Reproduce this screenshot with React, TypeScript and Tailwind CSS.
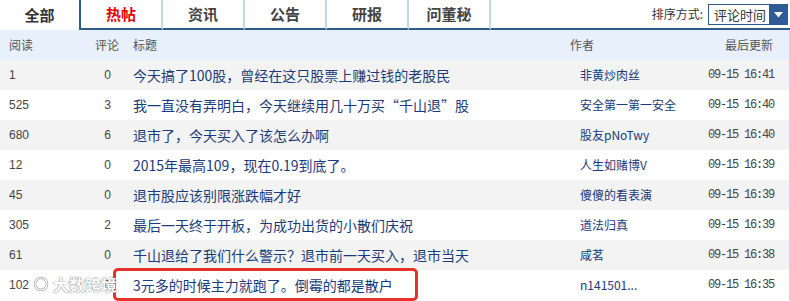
interface Post {
  reads: string;
  comments: string;
  title: string;
  author: string;
  time: string;
}

const tabs = ["全部", "热帖", "资讯", "公告", "研报", "问董秘"];

const posts: Post[] = [
  { reads: "1", comments: "0", title: "今天搞了100股，曾经在这只股票上赚过钱的老股民", author: "非黄炒肉丝", time: "09-15 16:41" },
  { reads: "525", comments: "3", title: "我一直没有弄明白，今天继续用几十万买“千山退”股", author: "安全第一第一安全", time: "09-15 16:40" },
  { reads: "680", comments: "6", title: "退市了，今天买入了该怎么办啊", author: "股友pNoTwy", time: "09-15 16:40" },
  { reads: "12", comments: "0", title: "2015年最高109，现在0.19到底了。", author: "人生如赌博V", time: "09-15 16:39" },
  { reads: "45", comments: "0", title: "退市股应该别限涨跌幅才好", author: "傻傻的看表演", time: "09-15 16:39" },
  { reads: "305", comments: "2", title: "最后一天终于开板，为成功出货的小散们庆祝", author: "道法归真", time: "09-15 16:39" },
  { reads: "61", comments: "0", title: "千山退给了我们什么警示？退市前一天买入，退市当天", author: "咸茗", time: "09-15 16:38" },
  { reads: "102", comments: "0", title: "3元多的时候主力就跑了。倒霉的都是散户", author: "n141501...", time: "09-15 16:35" },
];

const cjk = "font-['Noto_Sans_CJK_SC','Noto_Sans',sans-serif]";

export default function App() {
  return (
    <div className={`relative h-[301px] w-[790px] overflow-hidden bg-white ${cjk}`}>
      {/* tab bar */}
      <div className="flex h-[30px] items-stretch">
        {tabs.map((t, i) => (
          <div
            key={t}
            className={
              i === 0
                ? "flex w-[81px] items-center justify-center border-r-2 border-[#2e5a8c] bg-white text-[15px] font-bold text-[#333]"
                : `flex w-[82px] items-center justify-center border-b-2 border-r-2 border-b-[#2e5a8c] border-r-[#c3d6e6] text-[15px] font-bold ${i === 1 ? "text-[#e60000]" : "text-[#444]"}`
            }
          >
            {t}
          </div>
        ))}
        <div className="flex flex-1 items-start justify-end gap-[5px] border-b-2 border-[#2e5a8c] pt-[4px] pr-[2px]">
          <span className="pt-[2px] text-[12px] leading-[16px] text-[#333]">排序方式:</span>
          <div className="flex h-[21px] w-[80px] border border-[#2e5a8c] bg-white">
            <span className="flex-1 pl-[5px] text-[13px] leading-[19px] text-[#333]">评论时间</span>
            <span className="flex w-[18px] items-center justify-center bg-[#2e5a95]">
              <svg width="9" height="6" viewBox="0 0 9 6">
                <path d="M0 0 H9 L4.5 5.5 Z" fill="#fff" />
              </svg>
            </span>
          </div>
        </div>
      </div>

      <div className="border-r border-[#c8d8e8]">
        {/* header */}
        <div className="flex h-[30px] items-center bg-[#e8f0fb] text-[12px] text-[#555]">
          <span className="w-[95px] pl-[9px]">阅读</span>
          <span className="w-[38px]">评论</span>
          <span className="w-[437px]">标题</span>
          <span className="w-[155px]">作者</span>
          <span>最后更新</span>
        </div>

        {/* rows */}
        {posts.map((p, i) => (
          <div
            key={p.title}
            className={`flex h-[30px] items-center ${i % 2 === 0 ? "bg-[#f3f3f3]" : "bg-white"}`}
          >
            <span className="w-[89px] pl-[9px] font-['Liberation_Sans',sans-serif] text-[12px] text-[#444]">
              {p.reads}
            </span>
            <span className="w-[22px] text-right font-['Liberation_Sans',sans-serif] text-[12px] text-[#444]">
              {p.comments}
            </span>
            <span className="w-[469px] pl-[22px] text-[14px] text-[#1b3a78]">{p.title}</span>
            <span className="w-[128px] text-[12px] text-[#1b3a78]">{p.author}</span>
            <span className="font-['Liberation_Mono',monospace] text-[12px] tracking-[-1.2px] text-[#444]">
              {p.time}
            </span>
          </div>
        ))}
      </div>

      {/* highlight */}
      <div className="absolute left-[113px] top-[268px] h-[33px] w-[305px] rounded-[5px] border-[3px] border-[#e8312a]" />

      {/* watermark */}
      <div className="absolute left-[33px] top-[276px] flex items-center gap-[4px] text-white [text-shadow:0_0_1px_#777,0_0_1px_#777]">
        <svg width="16" height="14" viewBox="0 0 16 14" className="opacity-90">
          <circle cx="8" cy="7" r="6" fill="none" stroke="#999" strokeWidth="2.5" />
          <circle cx="8" cy="7" r="6" fill="none" stroke="#fff" strokeWidth="1.2" />
        </svg>
        <span className="text-[16px] font-bold leading-none">大数跨境</span>
      </div>
    </div>
  );
}
